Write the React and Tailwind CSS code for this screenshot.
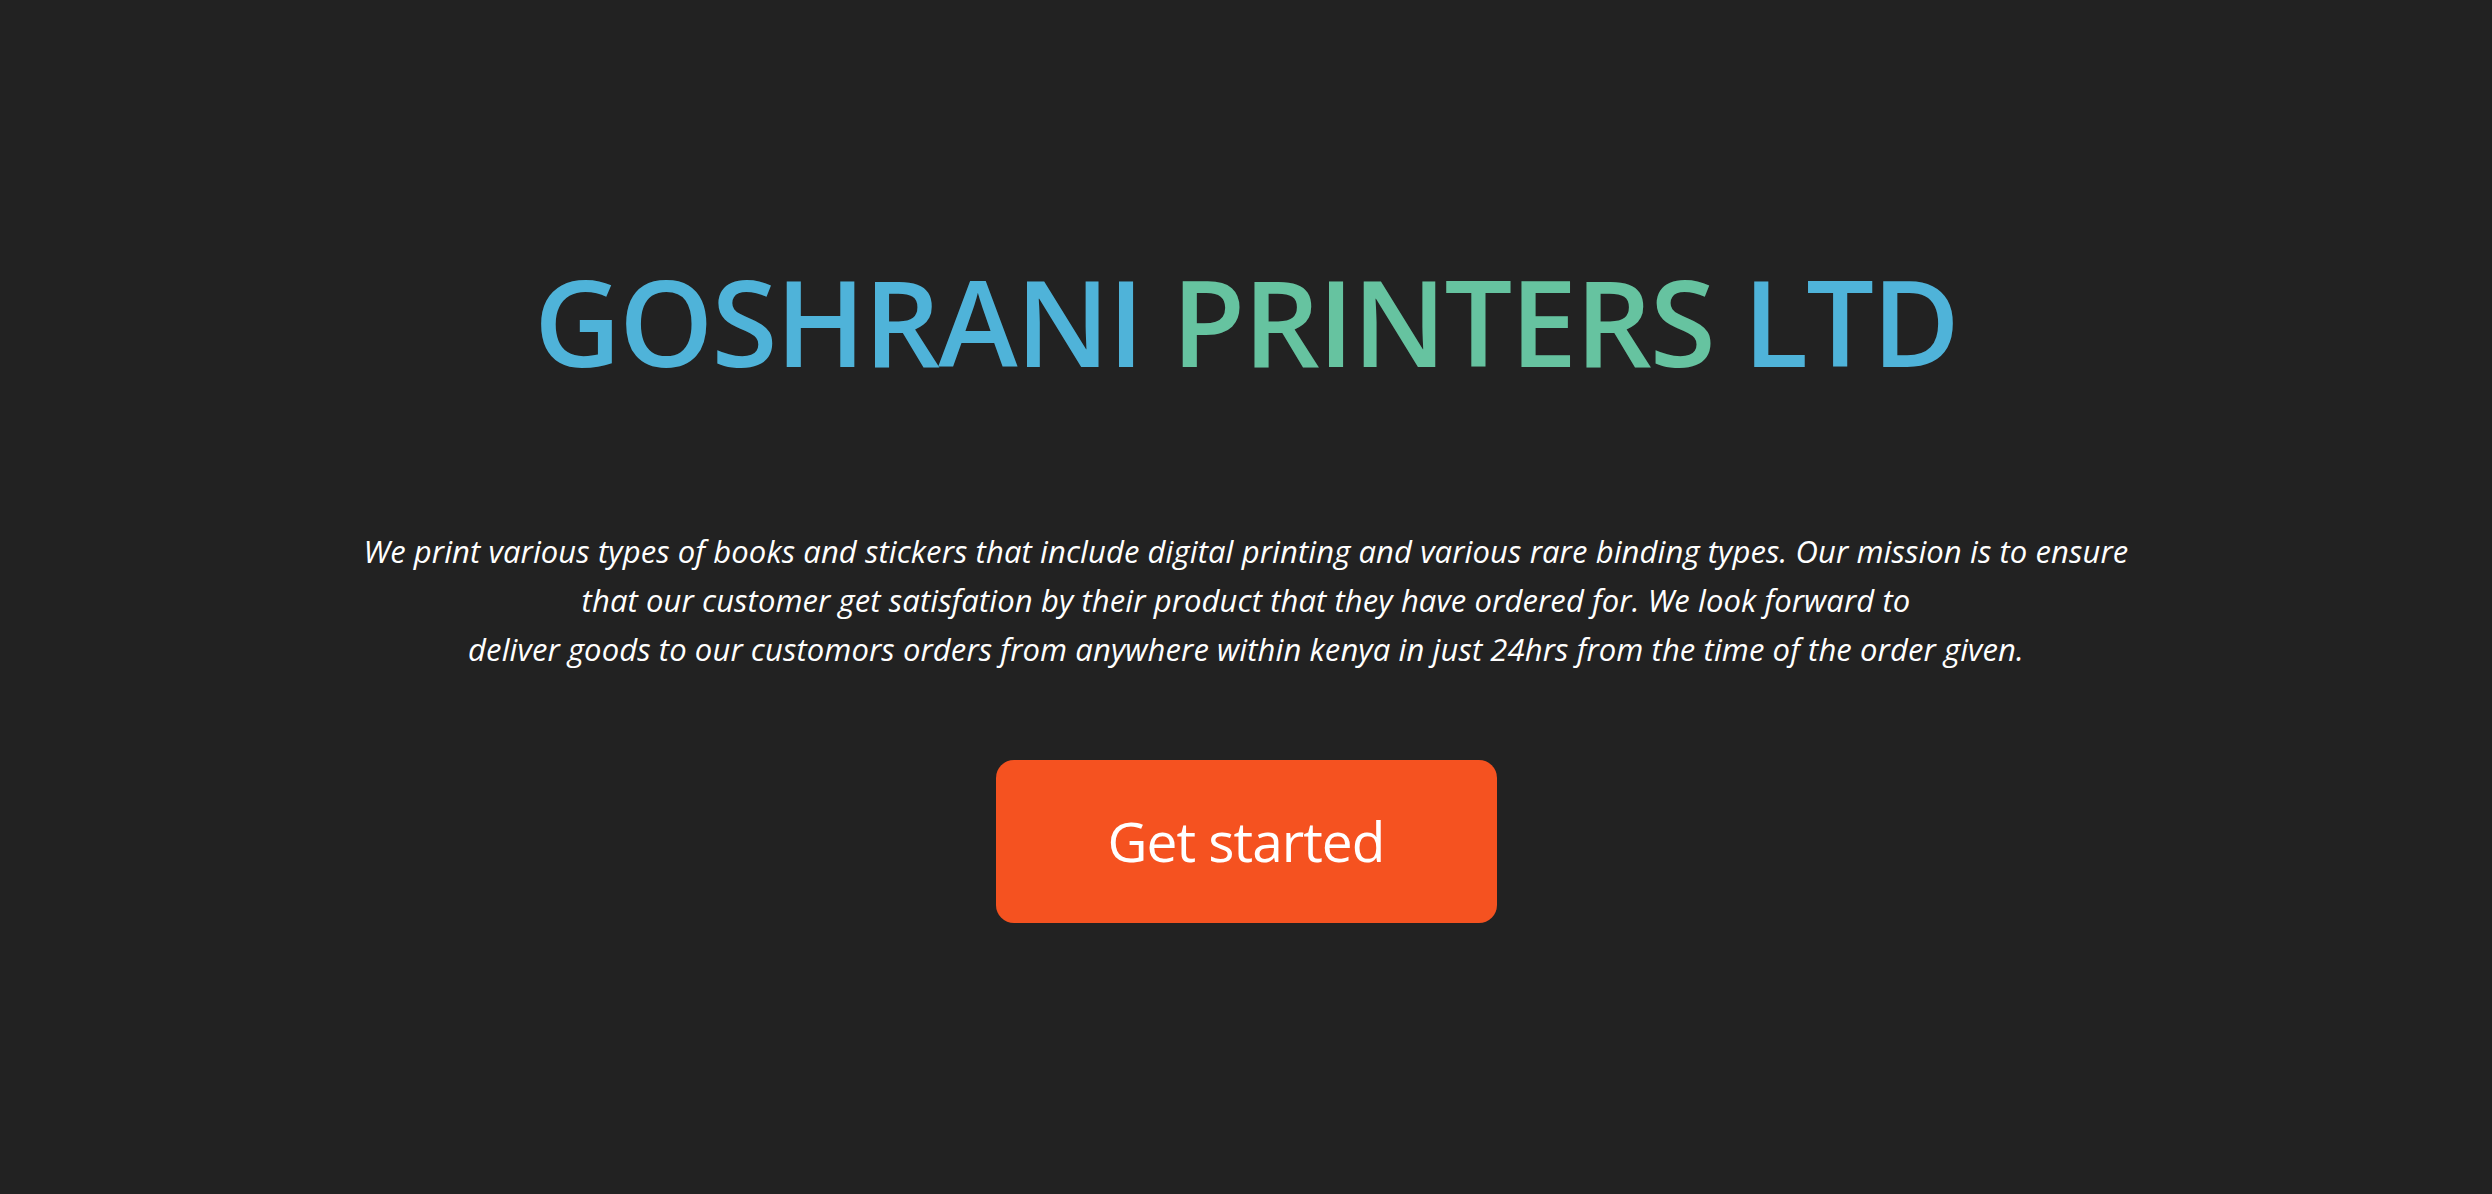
export default function App() {
  return (
    <div className="w-full h-[1194px] bg-[#222222] flex flex-col items-center" style={{ fontFamily: '"Open Sans", "Noto Sans", sans-serif' }}>
      <h1 className="mt-[261px] text-[120px] leading-none font-semibold tracking-[-2px] whitespace-nowrap">
        <span className="text-[#4fb3d9]">GOSHRANI </span>
        <span className="text-[#66c3a0]">PRINTERS </span>
        <span className="text-[#4fb3d9]">LTD</span>
      </h1>
      <p className="mt-[146px] text-[31px] leading-[49px] italic text-white text-center whitespace-nowrap tracking-[0.1px]">
        We print various types of books and stickers that include digital printing and various rare binding types. Our mission is to ensure
        <br />
        that our customer get satisfation by their product that they have ordered for. We look forward to
        <br />
        deliver goods to our customors orders from anywhere within kenya in just 24hrs from the time of the order given.
      </p>
      <button className="mt-[86px] w-[501px] h-[163px] rounded-[18px] bg-[#f55220] text-white text-[55px] tracking-[-1px] flex items-center justify-center">
        Get started
      </button>
    </div>
  );
}
